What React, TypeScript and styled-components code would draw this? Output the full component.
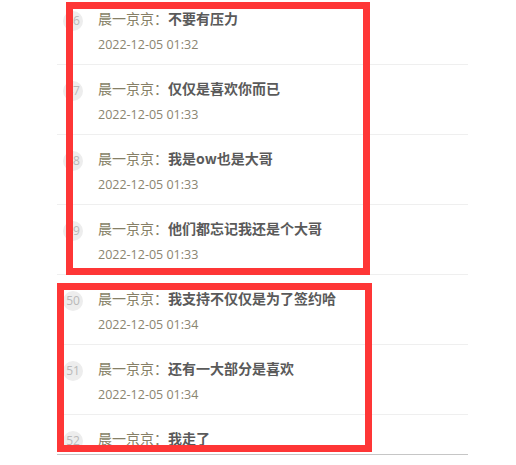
import React from "react";
import styled, { createGlobalStyle } from "styled-components";

const GlobalStyle = createGlobalStyle`
  html, body { margin: 0; padding: 0; background: #fff; }
  body { font-family: "Noto Sans CJK SC", "Microsoft YaHei", sans-serif; }
`;

const Page = styled.div`
  position: relative;
  width: 516px;
  height: 465px;
  overflow: hidden;
  background: #fff;
`;

const ListWindow = styled.div`
  margin-left: 57px;
  width: 411px;
  height: 454px;
  overflow: hidden;
  border-bottom: 1px solid #c6c6c6;
`;

const List = styled.ul`
  list-style: none;
  margin: -5px 0 0;
  padding: 0;
`;

const Row = styled.li`
  display: flex;
  align-items: flex-start;
  gap: 14px;
  padding: 13px 0 0 6px;
  box-sizing: content-box;
  height: 56px;
  border-bottom: 1px solid #efefef;
`;

const Avatar = styled.span`
  flex: none;
  width: 20px;
  height: 20px;
  margin-top: 3px;
  border-radius: 50%;
  background: #ededed;
  color: #b9b9b9;
  font-family: "Open Sans", "Liberation Sans", sans-serif;
  font-size: 12px;
  line-height: 20px;
  text-align: center;
`;

const Body = styled.div`
  display: flex;
  flex-direction: column;
  gap: 7px;
  padding-left: 1px;
`;

const Line = styled.div`
  font-size: 14px;
  line-height: 20px;
  white-space: nowrap;
`;

const Name = styled.span`
  color: #867f66;
`;

const Message = styled.span`
  color: #5a5a5a;
  font-weight: bold;
`;

const Time = styled.div`
  font-family: "Open Sans", "Noto Sans CJK SC", sans-serif;
  font-size: 12.5px;
  line-height: 20px;
  color: #8a8570;
`;

const Highlight = styled.div<{ $left: number; $top: number; $width: number; $height: number }>`
  position: absolute;
  left: ${(p) => p.$left}px;
  top: ${(p) => p.$top}px;
  width: ${(p) => p.$width}px;
  height: ${(p) => p.$height}px;
  box-sizing: border-box;
  border: 7px solid #fe3636;
  pointer-events: none;
`;

const rows: { n: number; msg: string; time?: string }[] = [
  { n: 46, msg: "不要有压力", time: "2022-12-05 01:32" },
  { n: 47, msg: "仅仅是喜欢你而已", time: "2022-12-05 01:33" },
  { n: 48, msg: "我是ow也是大哥", time: "2022-12-05 01:33" },
  { n: 49, msg: "他们都忘记我还是个大哥", time: "2022-12-05 01:33" },
  { n: 50, msg: "我支持不仅仅是为了签约哈", time: "2022-12-05 01:34" },
  { n: 51, msg: "还有一大部分是喜欢", time: "2022-12-05 01:34" },
  { n: 52, msg: "我走了" },
];

export default function App() {
  return (
    <Page>
      <GlobalStyle />
      <ListWindow>
        <List>
          {rows.map((r) => (
            <Row key={r.n}>
              <Avatar>{r.n}</Avatar>
              <Body>
                <Line>
                  <Name>晨一京京：</Name>
                  <Message>{r.msg}</Message>
                </Line>
                {r.time && <Time>{r.time}</Time>}
              </Body>
            </Row>
          ))}
        </List>
      </ListWindow>
      <Highlight $left={66} $top={2} $width={304} $height={273} />
      <Highlight $left={57} $top={283} $width={315} $height={169} />
    </Page>
  );
}
